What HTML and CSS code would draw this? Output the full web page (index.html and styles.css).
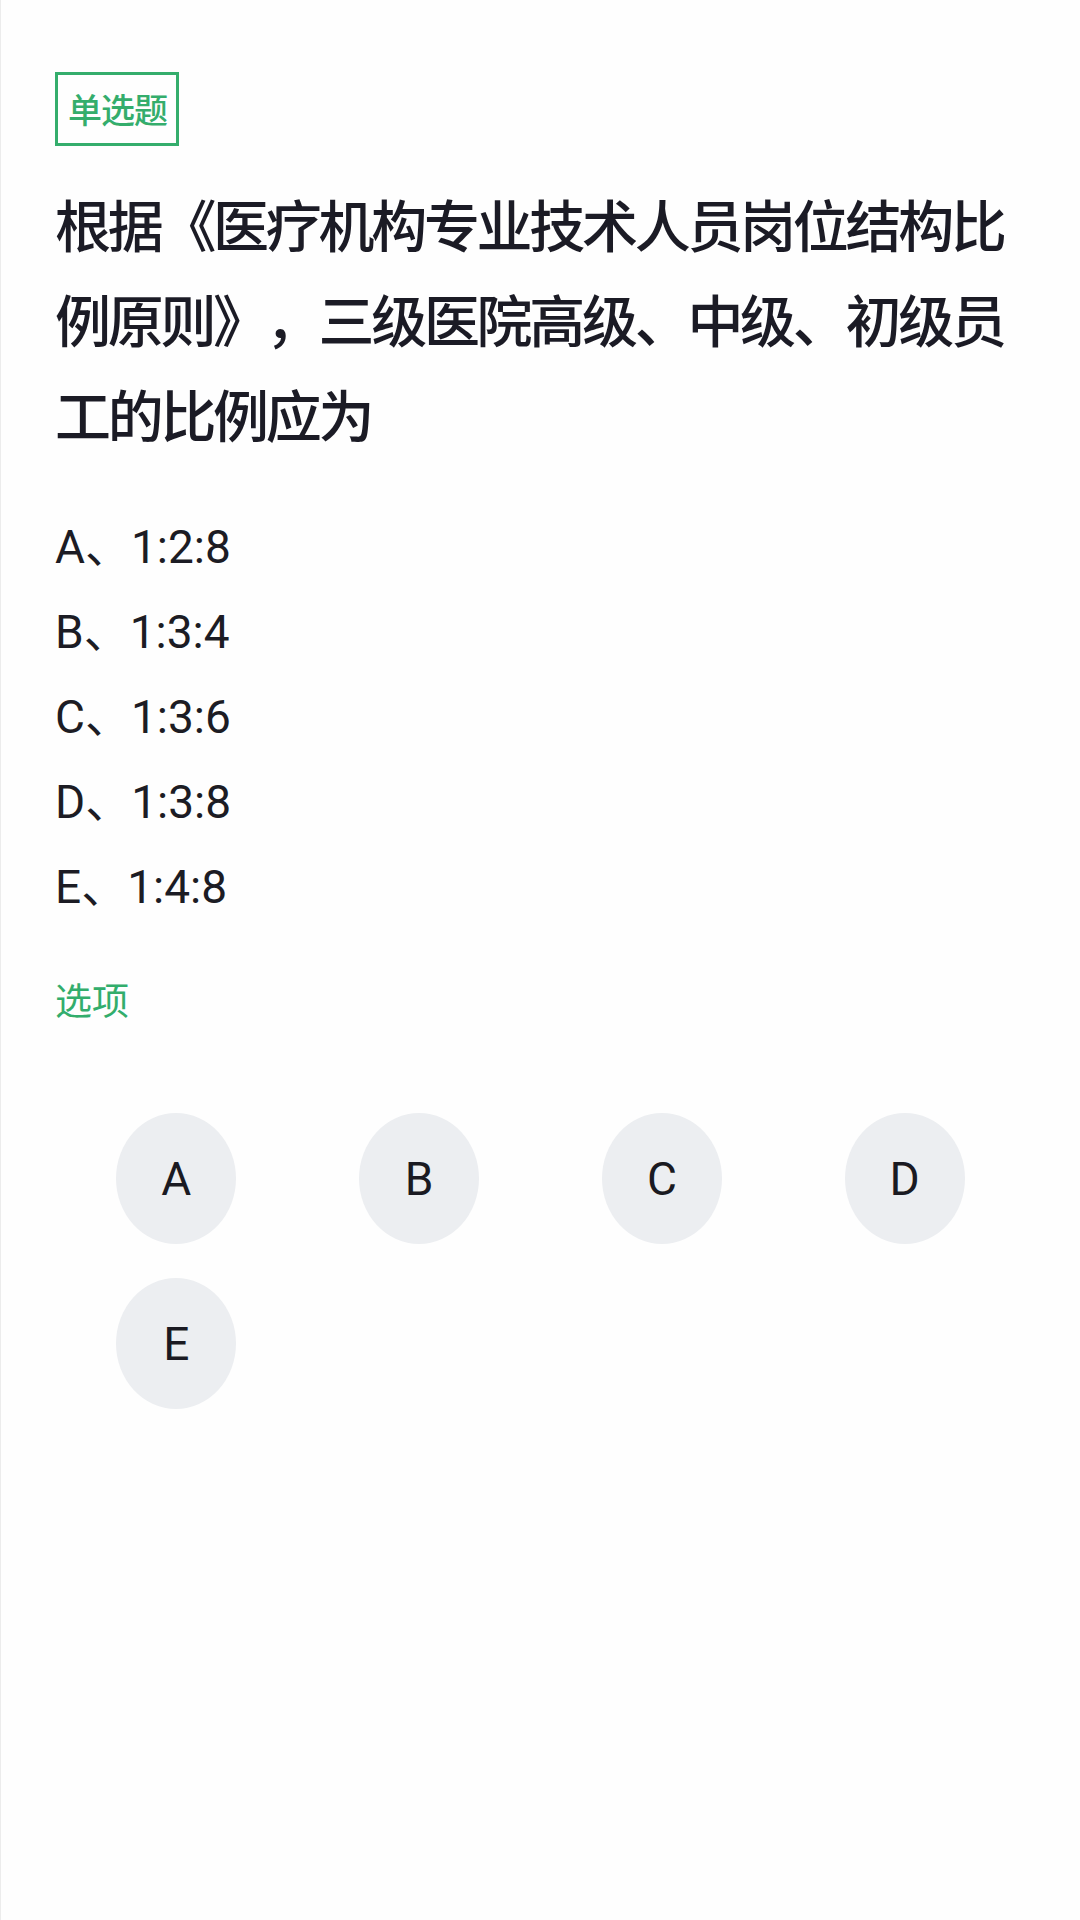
FILE: index.html
```html
<!DOCTYPE html>
<html lang="zh-CN">
<head>
  <meta charset="UTF-8">
  <title>单选题</title>
  <link rel="stylesheet" href="styles.css">
</head>
<body>
  <div class="page">
    <div class="tag">单选题</div>

    <div class="question">根据《医疗机构专业技术人员岗位结构比例原则》，三级医院高级、中级、初级员工的比例应为</div>

    <div class="options">
      <div class="option">A、1:2:8</div>
      <div class="option">B、1:3:4</div>
      <div class="option">C、1:3:6</div>
      <div class="option">D、1:3:8</div>
      <div class="option">E、1:4:8</div>
    </div>

    <div class="pick-title">选项</div>

    <div class="choices">
      <div class="choice">A</div>
      <div class="choice">B</div>
      <div class="choice">C</div>
      <div class="choice">D</div>
      <div class="choice">E</div>
    </div>
  </div>
</body>
</html>
```

FILE: styles.css
```css
body {
  margin: 0;
  background-color: #fefefe;
  color: #1b1b25;
  font-family: Roboto, "Noto Sans CJK SC", sans-serif;
}

.page {
  min-height: 1920px;
  box-sizing: border-box;
  padding: 72px 54px 0;
  border-left: 1px solid #ececec;
}

.tag {
  display: inline-block;
  border: 3px solid #34ad6c;
  color: #34ad6c;
  font-family: "Noto Sans CJK SC", sans-serif;
  font-size: 34px;
  font-weight: 500;
  line-height: 34px;
  letter-spacing: -1px;
  padding: 17px 9px 17px 10px;
}

.question {
  margin-top: 29px;
  font-family: "Noto Sans CJK SC", sans-serif;
  font-size: 56px;
  font-weight: 500;
  line-height: 95px;
  letter-spacing: -3.3px;
  text-spacing-trim: space-all;
}

.options {
  margin-top: 45px;
}

.option {
  font-size: 46px;
  line-height: 85px;
  color: #1c1c24;
}

.pick-title {
  margin-top: 44px;
  font-family: "Noto Sans CJK SC", sans-serif;
  font-size: 37px;
  line-height: 50px;
  color: #32ad6c;
}

.choices {
  margin-top: 89px;
  display: grid;
  grid-template-columns: repeat(4, 1fr);
  row-gap: 34px;
  justify-items: center;
}

.choice {
  width: 120px;
  height: 131px;
  border-radius: 50%;
  background-color: #eceef1;
  display: flex;
  align-items: center;
  justify-content: center;
  font-size: 46px;
  color: #1a1a22;
}
```
